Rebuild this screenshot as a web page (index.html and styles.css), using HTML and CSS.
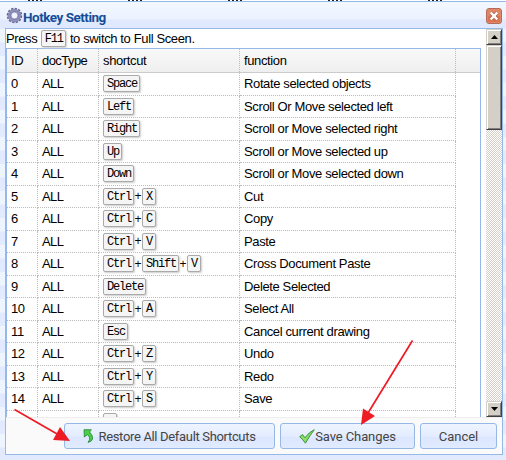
FILE: index.html
```
<!DOCTYPE html>
<html lang="en">
<head>
<meta charset="utf-8">
<title>Hotkey Setting</title>
<link rel="stylesheet" href="styles.css">
</head>
<body>
<div class="ruler"><b></b><b></b><b></b><b></b><b></b></div>
<section class="window">
  <header class="titlebar">
    <svg class="gear" width="17" height="17" viewBox="0 0 17 17"><circle cx="8.5" cy="8.5" r="6.7" fill="none" stroke="#68688c" stroke-width="2.2" stroke-dasharray="2.3 1.2"/><circle cx="8.5" cy="8.5" r="5" fill="none" stroke="#8c8cba" stroke-width="3.2"/><circle cx="8.5" cy="8.5" r="3.5" fill="#edf3ff" stroke="#65658b" stroke-width=".7"/></svg>
    <h1>Hotkey Setting</h1>
    <svg class="close" width="16" height="16" viewBox="0 0 16 16"><rect x=".5" y=".5" width="15" height="15" rx="2.5" fill="#df8867" stroke="#b66b5a"/><path d="M2 8h12v5q0 1-1 1H3q-1 0-1-1z" fill="#d97552"/><path d="M4.7 4.7l6.6 6.6m0-6.6l-6.6 6.6" stroke="#b95f4b" stroke-width="4"/><path d="M4.7 4.5l6.6 7m0-7l-6.6 7" stroke="#fff" stroke-width="2.5"/></svg>
  </header>
  <main class="panel">
    <div class="body">
      <div class="content">
        <p class="hint">Press <kbd>F11</kbd> to switch to Full Sceen.</p>
        <div class="grid">
          <div class="row head"><span>ID</span><span>docType</span><span>shortcut</span><span>function</span></div>
          <div class="row"><span>0</span><span>ALL</span><span><kbd>Space</kbd></span><span>Rotate selected objects</span></div>
          <div class="row"><span>1</span><span>ALL</span><span><kbd>Left</kbd></span><span>Scroll Or Move selected left</span></div>
          <div class="row"><span>2</span><span>ALL</span><span><kbd>Right</kbd></span><span>Scroll or Move selected right</span></div>
          <div class="row"><span>3</span><span>ALL</span><span><kbd>Up</kbd></span><span>Scroll or Move selected up</span></div>
          <div class="row"><span>4</span><span>ALL</span><span><kbd>Down</kbd></span><span>Scroll or Move selected down</span></div>
          <div class="row"><span>5</span><span>ALL</span><span><kbd>Ctrl</kbd><i>+</i><kbd>X</kbd></span><span>Cut</span></div>
          <div class="row"><span>6</span><span>ALL</span><span><kbd>Ctrl</kbd><i>+</i><kbd>C</kbd></span><span>Copy</span></div>
          <div class="row"><span>7</span><span>ALL</span><span><kbd>Ctrl</kbd><i>+</i><kbd>V</kbd></span><span>Paste</span></div>
          <div class="row"><span>8</span><span>ALL</span><span><kbd>Ctrl</kbd><i>+</i><kbd>Shift</kbd><i>+</i><kbd>V</kbd></span><span>Cross Document Paste</span></div>
          <div class="row"><span>9</span><span>ALL</span><span><kbd>Delete</kbd></span><span>Delete Selected</span></div>
          <div class="row"><span>10</span><span>ALL</span><span><kbd>Ctrl</kbd><i>+</i><kbd>A</kbd></span><span>Select All</span></div>
          <div class="row"><span>11</span><span>ALL</span><span><kbd>Esc</kbd></span><span>Cancel current drawing</span></div>
          <div class="row"><span>12</span><span>ALL</span><span><kbd>Ctrl</kbd><i>+</i><kbd>Z</kbd></span><span>Undo</span></div>
          <div class="row"><span>13</span><span>ALL</span><span><kbd>Ctrl</kbd><i>+</i><kbd>Y</kbd></span><span>Redo</span></div>
          <div class="row"><span>14</span><span>ALL</span><span><kbd>Ctrl</kbd><i>+</i><kbd>S</kbd></span><span>Save</span></div>
          <div class="row"><span></span><span></span><span><kbd>&nbsp;</kbd></span><span></span></div>
        </div>
      </div>
      <div class="scrollbar">
        <div class="bevel arrow"><svg width="7" height="4"><path d="M0 4L3.5 0L7 4z"/></svg></div>
        <div class="bevel thumb"></div>
        <div class="track"></div>
        <div class="bevel arrow"><svg width="7" height="4"><path d="M0 0L3.5 4L7 0z"/></svg></div>
      </div>
    </div>
    <footer class="actions">
      <button class="restore"><svg width="11" height="14" viewBox="0 0 11 14"><path d="M1 .7H8.300L6.600 3Q10.200 6.500 9.500 10Q8.800 12.600 5 13.400Q7.300 10.600 6.500 8.500Q5.700 6.700 4.500 5.700L1.300 8z" fill="#4bcc4b" stroke="#238632" stroke-width=".8"/></svg>Restore All Default Shortcuts</button>
      <button class="save"><svg width="16" height="15" viewBox="0 0 16 15"><path d="M.7 7.700L3.600 5.600L6 8.800Q10 3 15.300.7Q10.800 6.500 6.400 14.200Q4 10.500.7 7.700z" fill="#8be068" stroke="#328831" stroke-width=".9"/></svg>Save Changes</button>
      <button class="cancel">Cancel</button>
    </footer>
  </main>
</section>
<svg class="pointers" width="506" height="460" viewBox="0 0 506 460"><path d="M14.500 409.500L58 434.500M412.500 340.500L368 413" stroke="#ed1c24" stroke-width="1.7" fill="none"/><path d="M70 441L60 427L53 440zM361 425L363 408.500L375 416z" fill="#ed1c24"/></svg>
</body>
</html>
```
FILE: styles.css
```
* { box-sizing: border-box; }
body { margin: 0; width: 506px; height: 460px; overflow: hidden; position: relative; background: #fff; color: #000; font: 13px "Liberation Sans", Arial, sans-serif; }
.ruler { display: flex; height: 1px; padding-left: 28px; gap: 84px; }
.ruler b { width: 16px; background: repeating-linear-gradient(90deg, #222 0 2px, #fff 2px 4px); }
.window { height: 459px; border-top: 1px solid #95b8e7; padding: 0 3px 5px 5px; background: repeating-linear-gradient(#eff5ff 0, #eff5ff 13px, #e0e9ff 14px, #e2ebff 27px); }
.titlebar { display: flex; align-items: center; height: 26px; margin: 0 -3px 0 -5px; padding: 1px 4px 0 6px; background: linear-gradient(#f3f8ff 0, #ebf2ff 17px, #e0e9fd 18px, #dfe8fe 100%); }
.titlebar h1 { flex: 1; margin: 0; color: #164d98; font: bold 13.5px Roboto, sans-serif; letter-spacing: -.5px; white-space: nowrap; transform: translateY(1px); }
.panel { height: 427px; width: 498px; border: 1px solid #95b8e7; background: #fff; }
.body { display: flex; height: 388px; overflow: hidden; }
.content { width: 480px; flex: none; letter-spacing: -.37px; }
.hint { display: flex; align-items: center; margin: 0; height: 19px; white-space: pre; font-size: 13px; }
.grid { width: 475px; border: 1px solid #95b8e7; }
.row { display: grid; grid-template-columns: 31px 61px 141px 216px; height: 22.5px; }
.row > span { display: flex; align-items: center; padding: 0 0 0 4px; border-right: 1px dotted #bbb; border-bottom: 1px dotted #bbb; white-space: nowrap; overflow: hidden; }
.row > span:nth-child(2) { letter-spacing: -.55px; }
.head { height: 24px; background: linear-gradient(#f9f9f9, #efefef); border-bottom: 1px solid #ccc; }
.head > span { border-bottom: 0; }
kbd { display: inline-block; height: 17px; min-width: 14px; padding: 0 2px 0 3px; border: 1px solid #aaa; border-radius: 2px; background: #f5f5f5; box-shadow: 1px 1px 2px #ccc; font: 12px/17px "Liberation Mono", monospace; letter-spacing: -1.2px; }
i { width: 8px; font-style: normal; text-align: center; font-size: 12px; letter-spacing: 0; }
.hint kbd { margin: 0 1px 0 0; }
.scrollbar { display: flex; flex-direction: column; width: 16px; }
.bevel { background: #d4d0c8; border: 1px solid #404040; border-top-color: #d4d0c8; border-left-color: #d4d0c8; box-shadow: inset 1px 1px #fff, inset -1px -1px #808080; }
.arrow { display: grid; place-items: center; height: 16px; flex: none; }
.thumb { height: 85px; }
.track { flex: 1; background: repeating-conic-gradient(#d4d0c8 0 25%, #fff 0 50%) 0 0 / 2px 2px; }
.actions { display: flex; gap: 5px; height: 37px; padding: 5px 5px 0 58px; background: #fafafa; border-top: 1px solid #eee; }
button { display: flex; align-items: center; justify-content: center; height: 26px; padding: 0; border: 1px solid #95b8e7; border-radius: 3px; background: linear-gradient(#eff5ff, #e2ebff 55%, #dce6ff 56%, #e0ebff); color: #444; font: 13px Roboto, sans-serif; white-space: nowrap; }
.restore { width: 211px; gap: 4px; letter-spacing: -.33px; }
.save { width: 135px; letter-spacing: -.1px; }
.cancel { width: 77px; }
.pointers { position: absolute; inset: 0; pointer-events: none; }
```
